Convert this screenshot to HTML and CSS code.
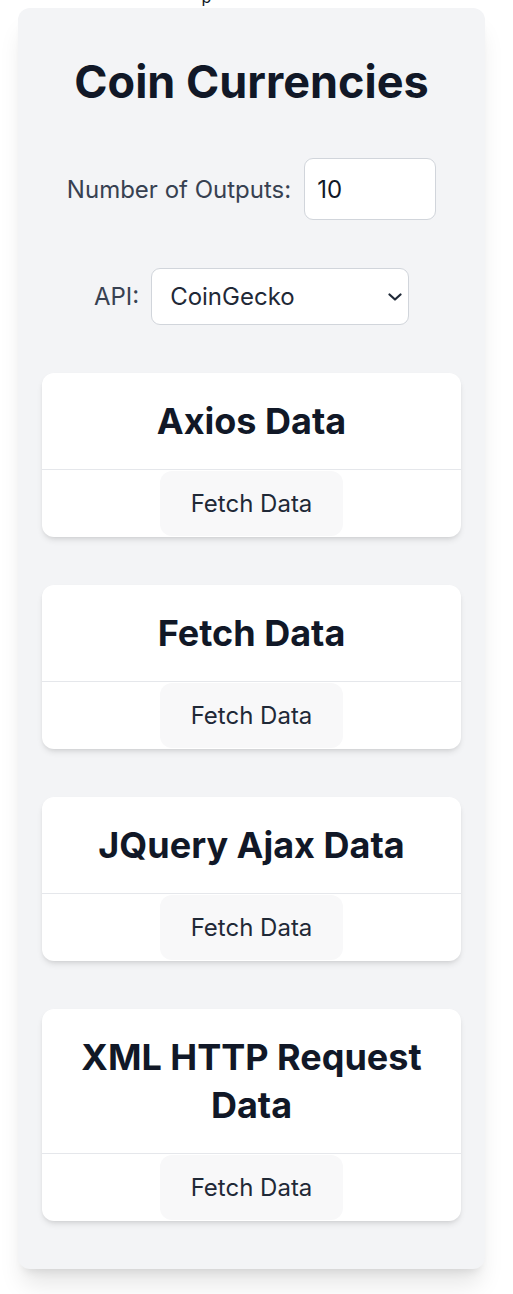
FILE: index.html
```html
<!DOCTYPE html>
<html lang="en">
<head>
<meta charset="utf-8">
<title>Coin Currencies</title>
<link rel="stylesheet" href="styles.css">
</head>
<body>
<div class="top-strip"><span class="cut-text">p</span></div>
<main class="panel">
  <h1 class="title">Coin Currencies</h1>
  <div class="field-row">
    <label class="field-label" for="outputs">Number of Outputs:</label>
    <input class="num-input" id="outputs" type="text" value="10">
  </div>
  <div class="field-row field-row-api">
    <label class="field-label" for="api">API:</label>
    <div class="select-wrap">
      <select class="api-select" id="api">
        <option>CoinGecko</option>
      </select>
      <svg class="chevron" width="14" height="8" viewBox="0 0 14 8"><path d="M1.5 1.5 L7 6.5 L12.5 1.5" fill="none" stroke="#1f2937" stroke-width="2.2" stroke-linecap="round" stroke-linejoin="round"/></svg>
    </div>
  </div>
  <section class="card">
    <div class="card-head"><h2 class="card-title">Axios Data</h2></div>
    <div class="card-foot"><button class="fetch-btn">Fetch Data</button></div>
  </section>
  <section class="card">
    <div class="card-head"><h2 class="card-title">Fetch Data</h2></div>
    <div class="card-foot"><button class="fetch-btn">Fetch Data</button></div>
  </section>
  <section class="card">
    <div class="card-head"><h2 class="card-title">JQuery Ajax Data</h2></div>
    <div class="card-foot"><button class="fetch-btn">Fetch Data</button></div>
  </section>
  <section class="card">
    <div class="card-head"><h2 class="card-title">XML HTTP Request Data</h2></div>
    <div class="card-foot"><button class="fetch-btn">Fetch Data</button></div>
  </section>
</main>
</body>
</html>
```
FILE: styles.css
```css
* { box-sizing: border-box; }
html, body { margin: 0; padding: 0; background: #ffffff; }
body {
  font-family: Inter, "Noto Sans", "Liberation Sans", sans-serif;
  color: #111827;
  padding-bottom: 26px;
}
.top-strip {
  height: 8px;
  overflow: hidden;
  display: flex;
  justify-content: center;
  align-items: flex-end;
}
.cut-text {
  font-size: 16px;
  line-height: 12px;
  color: #111827;
  margin-right: 100px;
  margin-bottom: 5px;
}
.panel {
  margin: 0 28px 0 18px;
  background: #f3f4f6;
  border-radius: 12px;
  padding: 48px 24px 48px;
  box-shadow: 0 20px 25px -5px rgba(0,0,0,0.10), 0 8px 10px -6px rgba(0,0,0,0.10);
}
.title {
  margin: 0 0 50px;
  text-align: center;
  font-size: 45px;
  line-height: 52px;
  font-weight: 700;
  color: #111827;
}
.field-row {
  display: flex;
  justify-content: center;
  align-items: center;
  gap: 13px;
  margin-bottom: 48px;
}
.field-label {
  font-size: 24px;
  color: #374151;
}
.num-input {
  width: 132px;
  height: 62px;
  border: 1px solid #d1d5db;
  border-radius: 9px;
  background: #fff;
  padding: 0 12px;
  font-family: inherit;
  font-size: 24px;
  color: #111827;
  outline: none;
}
.select-wrap {
  position: relative;
  width: 258px;
  height: 57px;
  margin-left: -1px;
}
.api-select {
  appearance: none;
  -webkit-appearance: none;
  width: 100%;
  height: 100%;
  border: 1px solid #d1d5db;
  border-radius: 9px;
  background: #fff;
  padding: 0 40px 0 18px;
  font-family: inherit;
  font-size: 24px;
  color: #1f2937;
  outline: none;
}
.chevron {
  position: absolute;
  right: 7px;
  top: 25px;
  pointer-events: none;
}
.card {
  background: #fff;
  border-radius: 12px;
  margin-bottom: 48px;
  box-shadow: 0 4px 6px -1px rgba(0,0,0,0.10), 0 2px 4px -2px rgba(0,0,0,0.10);
  overflow: hidden;
}
.card:last-child { margin-bottom: 0; }
.card-head {
  padding: 24px 24px;
  border-bottom: 1px solid #e5e7eb;
}
.card-title {
  margin: 0;
  text-align: center;
  font-size: 36px;
  line-height: 48px;
  font-weight: 700;
  color: #111827;
}
.card-foot {
  display: flex;
  justify-content: center;
  padding: 1px 0 1px;
}
.fetch-btn {
  width: 183px;
  height: 65px;
  border: none;
  border-radius: 12px;
  background: #f8f8f9;
  font-family: inherit;
  font-size: 24px;
  color: #1f2937;
  padding: 0;
}
```
